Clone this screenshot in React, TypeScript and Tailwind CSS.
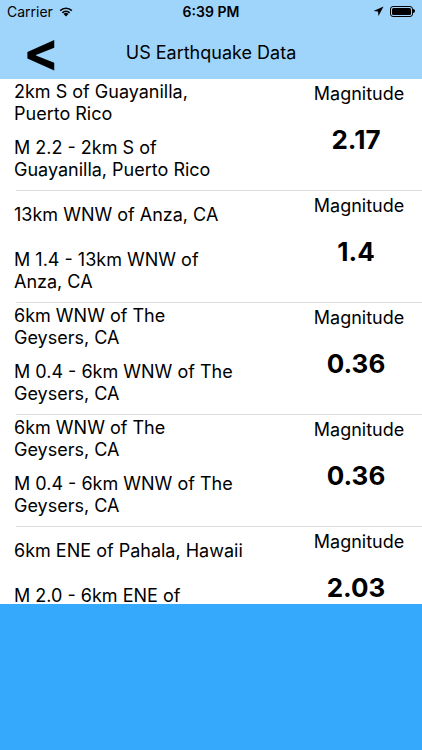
import React from "react";

type Quake = {
	place: string[];
	title: string[];
	mag: string;
};

const quakes: Quake[] = [
	{
		place: ["2km S of Guayanilla,", "Puerto Rico"],
		title: ["M 2.2 - 2km S of", "Guayanilla, Puerto Rico"],
		mag: "2.17",
	},
	{
		place: ["13km WNW of Anza, CA"],
		title: ["M 1.4 - 13km WNW of", "Anza, CA"],
		mag: "1.4",
	},
	{
		place: ["6km WNW of The", "Geysers, CA"],
		title: ["M 0.4 - 6km WNW of The", "Geysers, CA"],
		mag: "0.36",
	},
	{
		place: ["6km WNW of The", "Geysers, CA"],
		title: ["M 0.4 - 6km WNW of The", "Geysers, CA"],
		mag: "0.36",
	},
	{
		place: ["6km ENE of Pahala, Hawaii"],
		title: ["M 2.0 - 6km ENE of", "Pahala, Hawaii"],
		mag: "2.03",
	},
];

function StatusBar() {
	return (
		<div className="h-[22px] flex items-center justify-between px-[7px] text-[14px] text-black">
			<div className="flex items-center gap-[5px] w-[120px]">
				<span>Carrier</span>
				<svg width="16" height="12" viewBox="0 0 16 12">
					<path d="M8 11.5 L5.6 9 A3.4 3.4 0 0 1 10.4 9 Z" fill="black" />
					<path d="M3.8 7.2 A6 6 0 0 1 12.2 7.2 L11 8.4 A4.3 4.3 0 0 0 5 8.4 Z" fill="black" />
					<path d="M1.6 5 A9.2 9.2 0 0 1 14.4 5 L13.2 6.2 A7.5 7.5 0 0 0 2.8 6.2 Z" fill="black" />
				</svg>
			</div>
			<span className="font-semibold">6:39 PM</span>
			<div className="flex items-center justify-end gap-[6px] w-[120px]">
				<svg width="11" height="11" viewBox="0 0 11 11">
					<path d="M10.5 0.5 L0.5 5 L5 5.5 L5.5 10 Z" fill="black" />
				</svg>
				<div className="flex items-center">
					<div className="w-[23px] h-[11px] rounded-[3px] border border-black p-[1px]">
						<div className="w-full h-full rounded-[1.5px] bg-black" />
					</div>
					<div className="w-[1.5px] h-[4px] bg-black rounded-r-sm" />
				</div>
			</div>
		</div>
	);
}

function Row({ q }: { q: Quake }) {
	return (
		<div className="flex h-[112px] shrink-0 border-b border-[#dcdcdc] ml-[16px]">
			<div className="w-[280px] -ml-[2px] flex flex-col text-[18px] leading-[22px] text-black">
				<div className="h-[44px] mt-[2px] flex flex-col justify-center">
					{q.place.map((l, i) => (
						<span key={i} className="whitespace-nowrap">{l}</span>
					))}
				</div>
				<div className="mt-[12px] flex flex-col">
					{q.title.map((l, i) => (
						<span key={i} className="whitespace-nowrap">{l}</span>
					))}
				</div>
			</div>
			<div className="flex-1 flex flex-col items-center text-black">
				<span className="text-[18px] leading-[22px] mt-[4px] pl-[2px]">Magnitude</span>
				<span className="text-[26px] leading-[30px] font-bold mt-[20px] -ml-[4px]">{q.mag}</span>
			</div>
		</div>
	);
}

export default function App() {
	return (
		<div
			className="w-[422px] h-[750px] flex flex-col bg-white overflow-hidden"
			style={{ fontFamily: 'Inter, "Liberation Sans", Arial, sans-serif' }}>
			<div className="bg-[#9fd4fb] h-[79px] shrink-0 flex flex-col">
				<StatusBar />
				<div className="relative flex-1 flex items-center justify-center">
					<span className="absolute left-[23px] top-[12px] text-[54px] leading-[36px] font-bold text-black">
						&lt;
					</span>
					<span className="text-[18px] text-black mt-[4px]">US Earthquake Data</span>
				</div>
			</div>
			<div className="h-[525px] shrink-0 overflow-hidden flex flex-col">
				{quakes.map((q, i) => (
					<Row key={i} q={q} />
				))}
			</div>
			<div className="flex-1 bg-[#35aafc]" />
		</div>
	);
}
